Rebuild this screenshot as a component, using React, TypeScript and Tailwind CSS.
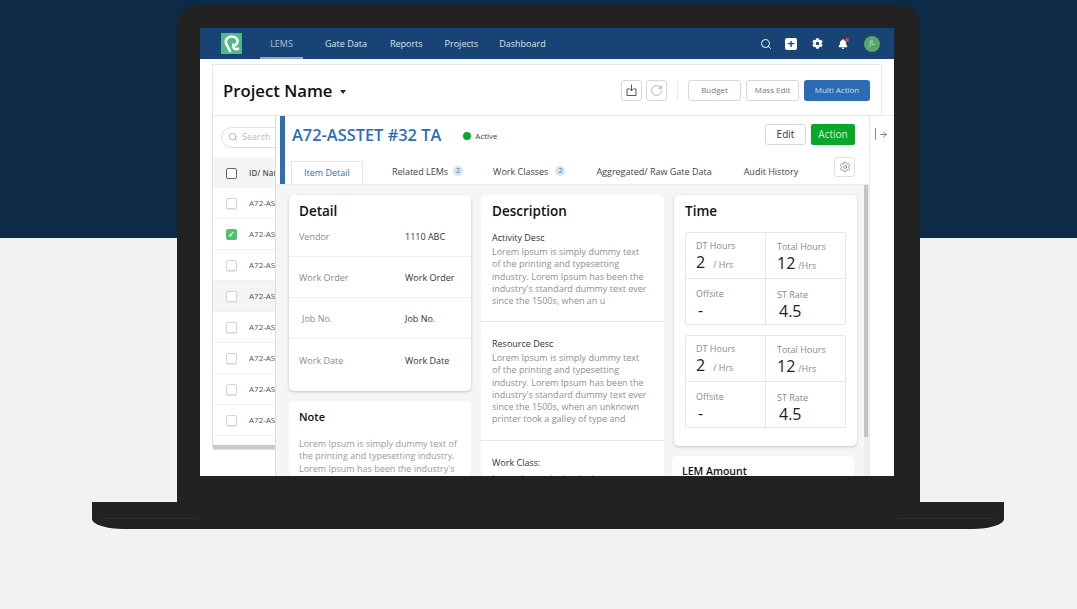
import { ArrowRight, RotateCw, Search, Settings } from 'lucide-react';
import { FaBell, FaCog } from 'react-icons/fa';

const listRows = [false, true, false, false, false, false, false, false];

function Logo() {
  return (
    <svg width="21" height="21" viewBox="0 0 21 21" className="shrink-0">
      <rect width="21" height="21" fill="#4fb98a" />
      <path
        d="M9.5 19 L5.8 12 C3 6.5 7 3.5 10.5 3.5 C14.5 3.5 17 6 16.5 9 C16 11.5 14 12.5 12.5 12 L12.5 14.5 C13 16 15 16.5 18 15.5"
        fill="none"
        stroke="#fff"
        strokeWidth="2.6"
      />
    </svg>
  );
}

function ExportIcon() {
  return (
    <svg width="11" height="12" viewBox="0 0 11 12" fill="none" stroke="#444" strokeWidth="0.9">
      <path d="M3 5 H1 V11.5 H10 V5 H8" />
      <path d="M5.5 0.5 V6.5 M3.5 4.5 L5.5 6.8 L7.5 4.5" />
    </svg>
  );
}

function TabBadge({ gap }: { gap: string }) {
  return (
    <span className={`${gap} flex h-[10px] w-[10px] items-center justify-center rounded-full bg-[#d8e3f2] text-[7px] text-[#4a78b5]`}>
      2
    </span>
  );
}

function DetailRow({ label, value, className, labelClass }: { label: string; value: string; className: string; labelClass?: string }) {
  return (
    <div className={`flex border-b border-[#eceeef] pl-[10px] text-[9px] ${className}`}>
      <span className={`w-[106px] text-[#8a8a8a] ${labelClass ?? ''}`}>{label}</span>
      <span className="text-[#333]">{value}</span>
    </div>
  );
}

function TimeGrid() {
  return (
    <div className="grid h-[93px] w-[161px] grid-cols-[80px_1fr] grid-rows-[46px_1fr] rounded-[2px] border border-[#e6e6e6]">
      <div className="border-r border-b border-[#e6e6e6] pl-[10px] pt-[7px]">
        <p className="text-[9px] leading-[12px] text-[#8a8a8a]">DT Hours</p>
        <p className="text-[16px] leading-[20px] text-[#222]">
          2<span className="ml-[8px] text-[9px] text-[#8a8a8a]">/ Hrs</span>
        </p>
      </div>
      <div className="border-b border-[#e6e6e6] pl-[11px] pt-[7px]">
        <p className="text-[9px] leading-[13px] text-[#8a8a8a]">Total Hours</p>
        <p className="text-[16px] leading-[20px] text-[#222]">
          12<span className="ml-[3px] text-[9px] text-[#8a8a8a]">/Hrs</span>
        </p>
      </div>
      <div className="border-r border-[#e6e6e6] pl-[10px] pt-[9px]">
        <p className="text-[9px] leading-[12px] text-[#8a8a8a]">Offsite</p>
        <p className="pl-[2px] text-[16px] leading-[20px] text-[#222]">-</p>
      </div>
      <div className="pl-[11px] pt-[10px]">
        <p className="text-[9px] leading-[12px] text-[#8a8a8a]">ST Rate</p>
        <p className="pl-[2px] text-[16px] leading-[20px] text-[#222]">4.5</p>
      </div>
    </div>
  );
}

export default function App() {
  return (
    <div className="flex h-[609px] flex-col items-start overflow-hidden bg-[linear-gradient(#0d2a47_238px,#f2f2f2_238px)] pl-[92px] pt-[5px] font-['Open_Sans',sans-serif]">
      {/* laptop lid */}
      <div className="ml-[85px] h-[497px] w-[743px] shrink-0 rounded-t-[22px] bg-[#222] pl-[23px] pt-[23px]">
        <div className="flex h-[448px] w-[694px] flex-col overflow-hidden bg-white">
          {/* top nav */}
          <div className="flex h-[31px] shrink-0 items-center bg-[#174475] pl-[21px] pr-[14px] text-[9px] text-[#d9e3ee]">
            <Logo />
            <span className="ml-[18px] flex h-[31px] w-[43px] items-center justify-center border-b-[2px] border-[#8fa9c5] pt-[2px] text-[#a9c0d8]">LEMS</span>
            <span className="ml-[22px]">Gate Data</span>
            <span className="ml-[23px]">Reports</span>
            <span className="ml-[22px]">Projects</span>
            <span className="ml-[21px]">Dashboard</span>
            <div className="ml-auto flex items-center">
              <Search size={12} color="#fff" strokeWidth={2} />
              <span className="ml-[13px] flex h-[12px] w-[12px] items-center justify-center rounded-[2px] bg-white text-[13px] font-bold leading-none text-[#174475]">+</span>
              <FaCog size={11} color="#fff" className="ml-[15px]" />
              <span className="relative ml-[15px]">
                <FaBell size={10} color="#fff" />
                <span className="absolute right-[-1px] top-[-1px] h-[4px] w-[4px] rounded-full bg-[#e53b2c]" />
              </span>
              <span className="ml-[16px] flex h-[16px] w-[16px] items-center justify-center rounded-full bg-[#5aa469] text-[7px] text-[#cfe6d4]">JL</span>
            </div>
          </div>

          {/* project card */}
          <div className="ml-[12px] mt-[5px] flex min-h-0 flex-1 flex-col">
            <div className="mr-[12px] flex h-[51px] shrink-0 items-center border-x border-t border-[#e8e8e8] pl-[10px] pr-[11px]">
              <span className="pt-[2px] text-[16.7px] font-semibold text-[#111]">Project Name</span>
              <span className="ml-[8px] mt-[3px] h-0 w-0 border-x-[3px] border-t-[4px] border-x-transparent border-t-[#222]" />
              <div className="ml-auto flex items-center">
                <span className="flex h-[21px] w-[21px] items-center justify-center rounded-[3px] border border-[#d9d9d9]">
                  <ExportIcon />
                </span>
                <span className="ml-[4px] flex h-[21px] w-[21px] items-center justify-center rounded-[3px] border border-[#d9d9d9]">
                  <RotateCw size={13} color="#777" strokeWidth={1} />
                </span>
                <span className="ml-[10px] h-[19px] w-px bg-[#ececec]" />
                <span className="ml-[10px] flex h-[21px] w-[53px] items-center justify-center rounded-[3px] border border-[#d9d9d9] text-[8px] text-[#777]">Budget</span>
                <span className="ml-[5px] flex h-[21px] w-[53px] items-center justify-center rounded-[3px] border border-[#d9d9d9] text-[8px] text-[#777]">Mass Edit</span>
                <span className="ml-[5px] flex h-[21px] w-[66px] items-center justify-center rounded-[3px] bg-[#2b6cb4] text-[8px] text-[#cfdff0]">Multi Action</span>
              </div>
            </div>

            <div className="flex min-h-0 flex-1 border-t border-[#e8e8e8]">
              {/* list, mostly covered by the panel */}
              <div className="h-[334px] w-[63px] shrink-0 overflow-hidden rounded-bl-[3px] border-b border-l border-[#e0e0e0]">
                <div className="flex h-[42px] items-center pl-[8px]">
                  <div className="flex h-[21px] w-[70px] shrink-0 items-center rounded-full border border-[#dedede] pl-[6px] text-[9px] text-[#bbb]">
                    <Search size={10} color="#aaa" />
                    <span className="ml-[4px]">Search</span>
                  </div>
                </div>
                <div className="flex h-[30px] items-center whitespace-nowrap bg-[#f5f5f5] pl-[13px] text-[8px] font-semibold text-[#555]">
                  <span className="h-[11px] w-[11px] shrink-0 rounded-[2px] border border-[#666] bg-white" />
                  <span className="ml-[12px]">ID/ Name</span>
                </div>
                {listRows.map((checked, i) => (
                  <div key={i} className={`flex h-[31px] items-center whitespace-nowrap border-b border-[#efefef] pl-[13px] text-[8px] text-[#555] ${i === 3 ? 'bg-[#f4f4f4]' : ''}`}>
                    {checked ? (
                      <span className="flex h-[11px] w-[11px] shrink-0 items-center justify-center rounded-[2px] bg-[#4fc26b] text-[8px] font-bold leading-none text-white">✓</span>
                    ) : (
                      <span className="h-[11px] w-[11px] shrink-0 rounded-[2px] border border-[#d5d5d5] bg-white shadow-[0_1px_1px_#e5e5e5]" />
                    )}
                    <span className="ml-[12px]">A72-ASSTET</span>
                  </div>
                ))}
                <div className="mt-[9px] h-[4px] bg-[#c9c9c9]" />
              </div>

              {/* item panel */}
              <div className="z-10 flex min-w-0 w-[594px] shrink-0 flex-col border-l border-[#dddddd] bg-white">
                <div className="flex h-[69px] shrink-0 border-b border-[#ececec] pl-[4px]">
                  <div className="w-[5px] shrink-0 bg-[#2f6db5]" />
                  <div className="min-w-0 flex-1 pl-[6px] pr-[14px]">
                    <div className="flex h-[36px] items-center pl-[1px]">
                      <span className="pt-[2px] text-[16.4px] font-semibold text-[#2f6db5]">A72-ASSTET #32 TA</span>
                      <span className="ml-[22px] mt-[3px] h-[8px] w-[8px] rounded-full bg-[#0aa82a]" />
                      <span className="ml-[4px] mt-[3px] text-[8px] text-[#444]">Active</span>
                      <span className="ml-auto flex h-[21px] w-[41px] items-center justify-center rounded-[3px] border border-[#d9d9d9] text-[10px] text-[#333]">Edit</span>
                      <span className="ml-[5px] flex h-[21px] w-[44px] items-center justify-center rounded-[2px] bg-[#0aa82a] text-[10px] text-[#d2f0d8]">Action</span>
                    </div>
                    <div className="flex h-[32px] items-end text-[9px] text-[#444]">
                      <span className="flex h-[23px] w-[72px] items-center justify-center border border-b-0 border-[#e4e4e4] text-[#2f6db5]">Item Detail</span>
                      <span className="mb-[6px] ml-[29px] flex items-center">Related LEMs<TabBadge gap="ml-[5px]" /></span>
                      <span className="mb-[6px] ml-[30px] flex items-center">Work Classes<TabBadge gap="ml-[7px]" /></span>
                      <span className="mb-[6px] ml-[31px]">Aggregated/ Raw Gate Data</span>
                      <span className="mb-[6px] ml-[32px]">Audit History</span>
                      <span className="mb-[7px] ml-auto flex h-[20px] w-[21px] items-center justify-center rounded-[3px] border border-[#e0e0e0]">
                        <Settings size={12} color="#666" strokeWidth={1.2} />
                      </span>
                    </div>
                  </div>
                </div>

                {/* panel body */}
                <div className="flex min-h-0 flex-1 overflow-hidden bg-[#f4f5f5]">
                  <div className="flex min-w-0 flex-1 items-start pl-[13px] pt-[10px]">
                    <div className="w-[182px] shrink-0">
                      <div className="h-[196px] rounded-[5px] bg-white shadow-[0_1px_3px_rgba(0,0,0,0.2)]">
                        <h2 className="pl-[10px] pt-[7px] text-[13.5px] font-semibold leading-[18px] text-[#111]">Detail</h2>
                        <DetailRow label="Vendor" value="1110 ABC" className="h-[37px] pt-[10px]" />
                        <DetailRow label="Work Order" value="Work Order" className="h-[41px] items-center pt-[2px]" />
                        <DetailRow label="Job No." value="Job No." className="h-[41px] items-center pt-[2px]" labelClass="pl-[3px]" />
                        <div className="flex h-[41px] items-center pl-[10px] pt-[2px] text-[9px]">
                          <span className="w-[106px] text-[#8a8a8a]">Work Date</span>
                          <span className="text-[#333]">Work Date</span>
                        </div>
                      </div>
                      <div className="mt-[10px] h-[120px] rounded-[5px] bg-white px-[10px] pt-[7px]">
                        <h3 className="text-[11px] font-semibold leading-[18px] text-[#111]">Note</h3>
                        <p className="mt-[12px] text-[9px] leading-[12.3px] text-[#9a9a9a]">
                          Lorem Ipsum is simply dummy text of the printing and typesetting industry. Lorem Ipsum has been the industry's
                        </p>
                      </div>
                    </div>

                    <div className="ml-[10px] h-[330px] w-[183px] shrink-0 rounded-[5px] bg-white">
                      <h2 className="pl-[11px] pt-[7px] text-[13.5px] font-semibold leading-[18px] text-[#111]">Description</h2>
                      <div className="h-[102px] border-b border-[#e8e8e8] pl-[11px] pr-[15px] pt-[11px]">
                        <p className="text-[9px] leading-[13px] text-[#333]">Activity Desc</p>
                        <p className="mt-[2px] text-[9px] leading-[12.3px] text-[#8f8f8f]">
                          Lorem Ipsum is simply dummy text of the printing and typesetting industry. Lorem Ipsum has been the industry's standard dummy text ever since the 1500s, when an u
                        </p>
                      </div>
                      <div className="h-[119px] border-b border-[#e8e8e8] pl-[11px] pr-[15px] pt-[15px]">
                        <p className="text-[9px] leading-[13px] text-[#333]">Resource Desc</p>
                        <p className="mt-[2px] text-[9px] leading-[12.3px] text-[#8f8f8f]">
                          Lorem Ipsum is simply dummy text of the printing and typesetting industry. Lorem Ipsum has been the industry's standard dummy text ever since the 1500s, when an unknown printer took a galley of type and
                        </p>
                      </div>
                      <p className="pl-[11px] pt-[15px] text-[9px] leading-[13px] text-[#333]">Work Class:</p>
                      <p className="pl-[11px] pt-[4px] text-[9px] leading-[12.3px] text-[#8f8f8f]">Lorem Ipsum is simply dummy</p>
                    </div>

                    <div className="ml-[10px] w-[183px] shrink-0">
                      <div className="h-[251px] rounded-[5px] bg-white px-[11px] pt-[7px] shadow-[0_1px_3px_rgba(0,0,0,0.2)]">
                        <h2 className="text-[13.5px] font-semibold leading-[18px] text-[#111]">Time</h2>
                        <div className="mt-[12px] flex flex-col gap-[10px]">
                          <TimeGrid />
                          <TimeGrid />
                        </div>
                      </div>
                      <div className="-ml-[2px] mt-[10px] h-[60px] w-[182px] rounded-[5px] bg-white pl-[10px] pt-[8px]">
                        <h3 className="text-[10.5px] font-semibold leading-[14px] text-[#111]">LEM Amount</h3>
                      </div>
                    </div>
                  </div>
                  {/* vertical scrollbar */}
                  <div className="h-full w-[5px] shrink-0 bg-[#eeeeee]">
                    <div className="h-[252px] w-[4px] bg-[#c4c4c4]" />
                  </div>
                </div>
              </div>

              {/* collapsed side strip */}
              <div className="w-[25px] shrink-0 border-l border-[#e8e8e8] pl-[5px]">
                <div className="flex h-[36px] items-center">
                  <span className="h-[12px] w-px bg-[#888]" />
                  <ArrowRight size={9} color="#555" className="ml-[3px]" />
                </div>
              </div>
            </div>
          </div>
        </div>
      </div>

      {/* laptop base */}
      <div className="flex h-[27px] w-[912px] shrink-0 items-start justify-between rounded-b-[32px_10px] bg-[#222] px-[8px] pt-[16px]">
        <div className="h-px w-[98px] bg-[#2c2c2c]" />
        <div className="h-px w-[99px] bg-[#2c2c2c]" />
      </div>
    </div>
  );
}
